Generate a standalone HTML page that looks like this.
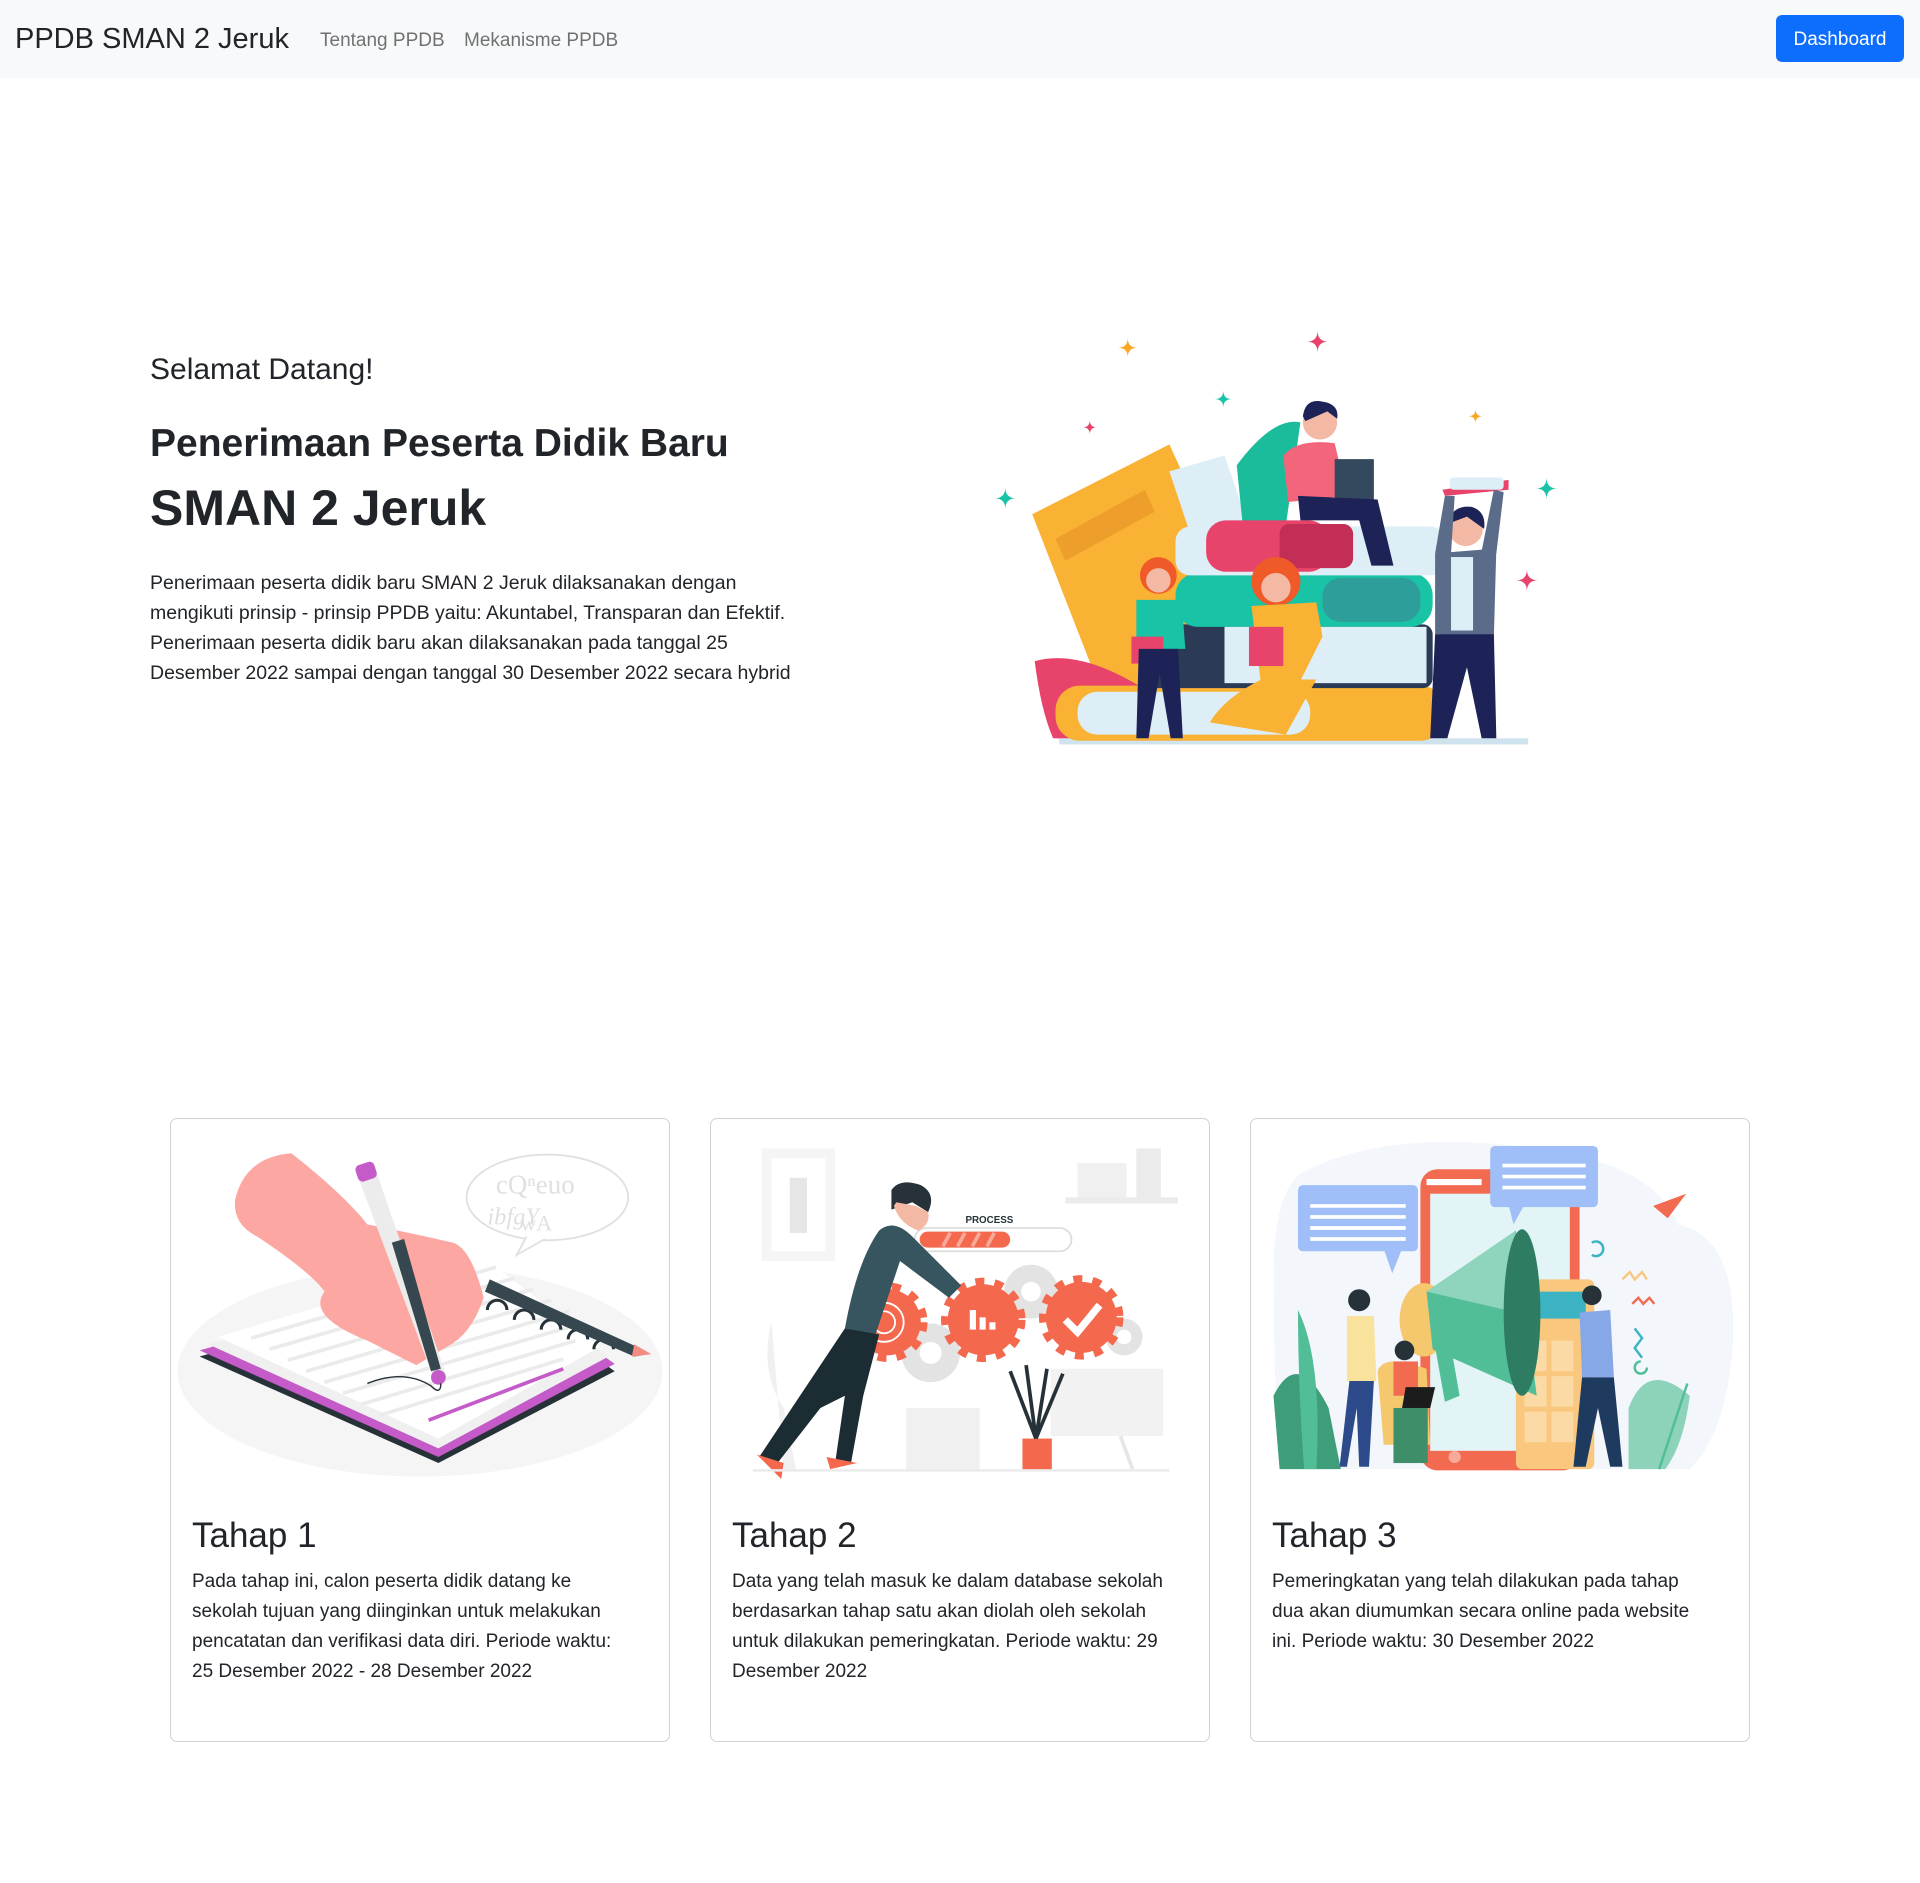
<!DOCTYPE html>
<html><head><meta charset="utf-8"><style>
*{margin:0;padding:0;box-sizing:border-box}
body{width:1920px;height:1883px;position:relative;background:#fff;font-family:"Liberation Sans",sans-serif;color:#212529;overflow:hidden}
.nav{position:absolute;left:0;top:0;width:1920px;height:78px;background:#f8f9fa}
.brand{position:absolute;left:15px;top:22px;font-size:29px;line-height:34px;color:#212529}
.link{position:absolute;top:29px;font-size:19px;line-height:24px;color:rgba(0,0,0,.55)}
.btn{position:absolute;left:1776px;top:15px;width:128px;height:47px;background:#0d6efd;color:#fff;border-radius:6px;font-size:19px;line-height:49px;text-align:center}
.t{position:absolute;white-space:nowrap}
.card{position:absolute;top:1118px;width:500px;height:624px;border:1px solid rgba(0,0,0,.175);border-radius:7px}
.card h2{position:absolute;left:21px;top:396px;font-size:35px;line-height:42px;font-weight:500}
.card p{position:absolute;left:21px;top:448px;font-size:19px;line-height:30px;white-space:nowrap}
svg.ill{position:absolute;left:0;top:0}
</style></head><body>
<div class="nav">
<div class="brand">PPDB SMAN 2 Jeruk</div>
<div class="link" style="left:320px">Tentang PPDB</div>
<div class="link" style="left:464px">Mekanisme PPDB</div>
<div class="btn">Dashboard</div>
</div>

<div class="t" style="left:150px;top:352px;font-size:30px;line-height:36px;font-weight:500">Selamat Datang!</div>
<div class="t" style="left:150px;top:420px;font-size:39px;line-height:48px;font-weight:bold">Penerimaan Peserta Didik Baru</div>
<div class="t" style="left:150px;top:477px;font-size:50px;line-height:62px;font-weight:bold">SMAN 2 Jeruk</div>
<div class="t" style="left:150px;top:568px;font-size:19.5px;line-height:30px">Penerimaan peserta didik baru SMAN 2 Jeruk dilaksanakan dengan<br>mengikuti prinsip - prinsip PPDB yaitu: Akuntabel, Transparan dan Efektif.<br>Penerimaan peserta didik baru akan dilaksanakan pada tanggal 25<br>Desember 2022 sampai dengan tanggal 30 Desember 2022 secara hybrid</div>

<div class="card" style="left:170px"><h2>Tahap 1</h2><p>Pada tahap ini, calon peserta didik datang ke<br>sekolah tujuan yang diinginkan untuk melakukan<br>pencatatan dan verifikasi data diri. Periode waktu:<br>25 Desember 2022 - 28 Desember 2022</p></div>
<div class="card" style="left:710px"><h2>Tahap 2</h2><p>Data yang telah masuk ke dalam database sekolah<br>berdasarkan tahap satu akan diolah oleh sekolah<br>untuk dilakukan pemeringkatan. Periode waktu: 29<br>Desember 2022</p></div>
<div class="card" style="left:1250px"><h2>Tahap 3</h2><p>Pemeringkatan yang telah dilakukan pada tahap<br>dua akan diumumkan secara online pada website<br>ini. Periode waktu: 30 Desember 2022</p></div>

<svg class="ill" width="1920" height="1883" viewBox="0 0 1568 1538" preserveAspectRatio="none">
<g>
<path d="M921,276Q921,284 929,284Q921,284 921,292Q921,284 913,284Q921,284 921,276Z" fill="#F9A826"/>
<path d="M1076,270Q1076,279 1085,279Q1076,279 1076,288Q1076,279 1067,279Q1076,279 1076,270Z" fill="#E8436B"/>
<path d="M999,319Q999,326 1006,326Q999,326 999,333Q999,326 992,326Q999,326 999,319Z" fill="#19C3A6"/>
<path d="M890,343Q890,349 896,349Q890,349 890,355Q890,349 884,349Q890,349 890,343Z" fill="#E8436B"/>
<path d="M1205,334Q1205,340 1211,340Q1205,340 1205,346Q1205,340 1199,340Q1205,340 1205,334Z" fill="#F9A826"/>
<path d="M821,398Q821,407 830,407Q821,407 821,416Q821,407 812,407Q821,407 821,398Z" fill="#19C3A6"/>
<path d="M1263,390Q1263,399 1272,399Q1263,399 1263,408Q1263,399 1254,399Q1263,399 1263,390Z" fill="#19C3A6"/>
<path d="M1247,465Q1247,474 1256,474Q1247,474 1247,483Q1247,474 1238,474Q1247,474 1247,465Z" fill="#E8436B"/>
<path d="M843,420L955,363L1045,560L915,605Z" fill="#F9B233"/>
<path d="M862,440L935,400L943,418L870,458Z" fill="#EE9E2A"/>
<path d="M955,385L1000,372L1020,430L975,445Z" fill="#DDEEF7"/>
<path d="M1010,380Q1040,340 1062,345L1050,430L1015,430Z" fill="#1ABC9C"/>
<path d="M845,540Q880,530 930,560L925,605L860,603Q850,580 845,540Z" fill="#E8436B"/>
<rect x="865" y="603" width="383" height="5" fill="#CFE3EE"/>
<rect x="862" y="560" width="318" height="45" rx="20" fill="#F9B233"/>
<rect x="880" y="565" width="190" height="35" rx="16" fill="#DDEEF7"/>
<rect x="930" y="510" width="240" height="52" rx="8" fill="#2B3A55"/>
<rect x="960" y="468" width="210" height="44" rx="18" fill="#19C3A6"/>
<rect x="1080" y="472" width="80" height="36" rx="15" fill="#2E9E9A"/>
<rect x="1000" y="512" width="165" height="46" fill="#DDEEF7"/>
<rect x="960" y="430" width="220" height="40" rx="12" fill="#DDEEF7"/>
<rect x="985" y="425" width="100" height="42" rx="16" fill="#E8436B"/>
<rect x="1045" y="428" width="60" height="36" rx="8" fill="#C22E55"/>
<circle cx="1078" cy="345" r="14" fill="#F4B9A4"/>
<path d="M1064,340Q1066,325 1080,328Q1094,330 1092,342L1084,336L1066,344Z" fill="#1D2357"/>
<path d="M1048,372Q1060,358 1090,362L1100,405L1052,410Z" fill="#F2657A"/>
<rect x="1090" y="375" width="32" height="36" fill="#34495E"/>
<path d="M1060,405L1125,408L1138,462L1120,462L1110,425L1062,425Z" fill="#1D2357"/>
<circle cx="1197" cy="432" r="14" fill="#F4B9A4"/>
<path d="M1182,428Q1186,412 1202,414Q1214,418 1212,432L1198,422Z" fill="#1D2357"/>
<path d="M1178,400L1232,392L1232,400L1180,405Z" fill="#E8436B"/>
<rect x="1184" y="390" width="44" height="10" rx="3" fill="#DDEEF7"/>
<path d="M1172,452L1222,448L1220,520L1172,518Z" fill="#5A6C8A"/>
<path d="M1172,452L1180,405L1188,405L1185,452Z M1210,450L1220,400L1228,402L1222,452Z" fill="#5A6C8A"/>
<rect x="1185" y="455" width="18" height="60" fill="#DDEEF7"/>
<path d="M1172,518L1220,518L1222,603L1210,603L1198,545L1182,603L1168,603Z" fill="#1D2357"/>
<circle cx="946" cy="470" r="15" fill="#F05A28"/><circle cx="946" cy="474" r="10" fill="#F4B9A4"/>
<path d="M928,490L965,490L968,530L928,530Z" fill="#19C3A6"/>
<rect x="924" y="520" width="26" height="22" fill="#E8436B"/>
<path d="M930,530L962,530L966,603L956,603L947,550L938,603L928,603Z" fill="#1D2357"/>
<circle cx="1042" cy="475" r="20" fill="#F05A28"/><circle cx="1042" cy="480" r="12" fill="#F4B9A4"/>
<path d="M1022,495L1075,492L1080,520L1060,560L1030,560Z" fill="#F9B233"/>
<path d="M1030,555L1075,555L1050,600L988,590Q1000,570 1030,555Z" fill="#F9B233"/>
<rect x="1020" y="512" width="28" height="32" fill="#E8436B"/>
</g>

<g>
<ellipse cx="343" cy="1120" rx="198" ry="86" fill="#F5F5F5"/>
<path d="M163,1108L395,1042L502,1120L358,1195Z" fill="#263238"/>
<path d="M163,1103L395,1037L502,1114L358,1190Z" fill="#C45BC8"/>
<path d="M170,1098L395,1032L497,1108L358,1183Z" fill="#F0F0F0"/>
<path d="M178,1092L395,1027L490,1100L358,1175Z" fill="#fff"/>
<g stroke="#EBEBEB" stroke-width="3">
<line x1="205" y1="1093" x2="405" y2="1035"/><line x1="220" y1="1102" x2="420" y2="1044"/><line x1="235" y1="1111" x2="435" y2="1053"/><line x1="250" y1="1120" x2="450" y2="1062"/><line x1="265" y1="1129" x2="465" y2="1071"/><line x1="280" y1="1138" x2="475" y2="1081"/><line x1="295" y1="1147" x2="470" y2="1095"/><line x1="310" y1="1156" x2="460" y2="1110"/>
</g>
<line x1="350" y1="1160" x2="460" y2="1118" stroke="#C45BC8" stroke-width="3"/>
<g fill="none" stroke="#263238" stroke-width="2.5">
<path d="M398,1070a8,8 0 0 1 16,0"/><path d="M420,1078a8,8 0 0 1 16,0"/><path d="M442,1086a8,8 0 0 1 16,0"/><path d="M464,1094a8,8 0 0 1 16,0"/><path d="M485,1102a8,8 0 0 1 16,0"/>
</g>
<path d="M400,1045L520,1100L530,1106L518,1108L396,1055Z" fill="#37474F"/>
<path d="M518,1098L532,1106L516,1108Z" fill="#F28B82"/>
<path d="M238,942Q200,945 192,980Q190,1000 210,1010Q255,1040 265,1055Q250,1075 300,1095Q330,1110 340,1115L365,1100Q385,1090 395,1060Q385,1020 370,1015Q340,1008 300,1000Q280,975 238,942Z" fill="#FDA7A3"/>
<path d="M290,955L305,950L365,1125L355,1128Z" fill="#ECECEC"/>
<path d="M320,1015L330,1012L360,1118L352,1120Z" fill="#37474F"/>
<rect x="291" y="950" width="16" height="14" rx="4" fill="#C45BC8" transform="rotate(-18 299 957)"/>
<circle cx="358" cy="1125" r="6" fill="#C45BC8"/>
<path d="M300,1130Q330,1118 352,1132Q360,1140 360,1130" fill="none" stroke="#263238" stroke-width="1.2"/>
<ellipse cx="447" cy="978" rx="66" ry="35" fill="#fff" stroke="#E0E0E0" stroke-width="1.5"/>
<path d="M430,1010L422,1025L445,1012" fill="#fff" stroke="#E0E0E0" stroke-width="1.5"/>
<text x="405" y="975" font-family="Liberation Serif" font-size="22" fill="#E0E0E0">cQⁿeuo</text>
<text x="398" y="1000" font-family="Liberation Serif" font-size="20" fill="#E0E0E0" font-style="italic">ibfgY</text>
<text x="425" y="1005" font-family="Liberation Serif" font-size="18" fill="#E0E0E0">wA</text>
</g>

<g>
<rect x="622" y="938" width="60" height="92" fill="#F5F5F5"/><rect x="630" y="946" width="44" height="76" fill="#fff"/><rect x="645" y="962" width="14" height="45" fill="#E6E6E6"/>
<rect x="870" y="978" width="92" height="5" fill="#EBEBEB"/><rect x="880" y="950" width="40" height="28" fill="#F0F0F0"/><rect x="928" y="938" width="20" height="40" fill="#EBEBEB"/>
<rect x="858" y="1118" width="92" height="55" fill="#F2F2F2"/><line x1="915" y1="1173" x2="925" y2="1200" stroke="#E6E6E6" stroke-width="3"/>
<rect x="740" y="1150" width="60" height="50" fill="#F0F0F0"/>
<path d="M630,1080Q620,1120 640,1150L650,1200L640,1200Z" fill="#F0F0F0"/>
<g fill="#E3E3E3"><circle cx="760" cy="1105" r="24"/><circle cx="842" cy="1055" r="22"/><circle cx="918" cy="1092" r="15"/></g>
<g fill="#fff"><circle cx="760" cy="1105" r="9"/><circle cx="842" cy="1055" r="8"/><circle cx="918" cy="1092" r="6"/></g>
<g fill="#F4694E">
<circle cx="725" cy="1080" r="27"/><circle cx="803" cy="1078" r="29"/><circle cx="883" cy="1076" r="29"/>
<g stroke="#F4694E" stroke-width="9" stroke-dasharray="7 8"><circle cx="803" cy="1078" r="30" fill="none"/><circle cx="883" cy="1076" r="30" fill="none"/><circle cx="725" cy="1080" r="28" fill="none"/></g>
</g>
<g fill="none" stroke="#fff" stroke-width="1.5"><circle cx="722" cy="1080" r="16"/><circle cx="722" cy="1080" r="9"/></g>
<g fill="#fff"><rect x="792" y="1070" width="5" height="16"/><rect x="800" y="1076" width="5" height="10"/><rect x="808" y="1080" width="5" height="6"/></g>
<path d="M870,1078L880,1088L898,1066" fill="none" stroke="#fff" stroke-width="6"/>
<rect x="747" y="1003" width="128" height="19" rx="9.5" fill="#fff" stroke="#DDD" stroke-width="1.5"/>
<rect x="751" y="1006" width="74" height="13" rx="6.5" fill="#F4694E"/>
<g stroke="#F8A99A" stroke-width="3"><line x1="770" y1="1018" x2="776" y2="1007"/><line x1="782" y1="1018" x2="788" y2="1007"/><line x1="794" y1="1018" x2="800" y2="1007"/><line x1="806" y1="1018" x2="812" y2="1007"/></g>
<text x="808" y="999" font-family="Liberation Sans" font-size="8" font-weight="bold" fill="#263238" text-anchor="middle">PROCESS</text>
<path d="M728,972Q735,962 752,968Q765,975 758,990L745,982L728,988Z" fill="#263238"/>
<path d="M730,985Q735,1000 750,1005Q760,1000 758,990L748,985L732,982Z" fill="#F4B9A4"/>
<path d="M718,1005Q730,995 745,1010L785,1050L775,1060L735,1030L715,1090L690,1085Q700,1030 718,1005Z" fill="#37555E"/>
<path d="M690,1085L718,1090L705,1140L695,1195L682,1195L690,1140L670,1150L635,1195L620,1190L660,1130Z" fill="#1C2C33"/>
<path d="M618,1188L640,1195L638,1208Z M675,1190L700,1195L678,1200Z" fill="#F4694E"/>
<rect x="835" y="1175" width="24" height="26" fill="#F4694E"/>
<path d="M846,1175L825,1120M846,1175L838,1115M846,1175L855,1118M846,1175L868,1122" stroke="#263238" stroke-width="3"/>
<line x1="615" y1="1201" x2="955" y2="1201" stroke="#EBEBEB" stroke-width="2"/>
</g>

<g>
<path d="M1060,960Q1120,925 1230,935Q1350,945 1370,1000Q1420,1010 1415,1100Q1410,1170 1380,1200L1045,1200Q1040,1120 1040,1040Q1040,980 1060,960Z" fill="#F3F7FC"/>
<rect x="1160" y="955" width="130" height="246" rx="14" fill="#F26B50"/>
<rect x="1168" y="975" width="114" height="210" fill="#E3F4F7"/>
<rect x="1165" y="963" width="45" height="5" fill="#fff"/>
<circle cx="1188" cy="1190" r="5" fill="#F8A99A"/>
<rect x="1238" y="1045" width="64" height="155" rx="5" fill="#F9C77D"/>
<rect x="1245" y="1055" width="50" height="22" fill="#3BB3C3"/>
<g fill="#FBDAA5"><rect x="1245" y="1095" width="18" height="25"/><rect x="1267" y="1095" width="18" height="25"/><rect x="1245" y="1124" width="18" height="25"/><rect x="1267" y="1124" width="18" height="25"/><rect x="1245" y="1153" width="18" height="25"/><rect x="1267" y="1153" width="18" height="25"/></g>
<rect x="1060" y="968" width="98" height="54" rx="4" fill="#A0BFF8"/>
<path d="M1130,1020L1137,1040L1145,1020Z" fill="#A0BFF8"/>
<g stroke="#fff" stroke-width="3"><line x1="1070" y1="985" x2="1148" y2="985"/><line x1="1070" y1="994" x2="1148" y2="994"/><line x1="1070" y1="1003" x2="1148" y2="1003"/><line x1="1070" y1="1012" x2="1148" y2="1012"/></g>
<rect x="1217" y="936" width="88" height="50" rx="4" fill="#A0BFF8"/>
<path d="M1232,984L1236,1000L1245,984Z" fill="#A0BFF8"/>
<g stroke="#fff" stroke-width="3"><line x1="1227" y1="952" x2="1295" y2="952"/><line x1="1227" y1="961" x2="1295" y2="961"/><line x1="1227" y1="970" x2="1295" y2="970"/></g>
<ellipse cx="1163" cy="1078" rx="20" ry="30" fill="#F5C86E"/>
<path d="M1165,1055L1238,1005L1255,1140L1170,1102Z" fill="#52BE98"/>
<path d="M1165,1055L1238,1005L1230,1070Z" fill="#8FD4BD"/>
<ellipse cx="1243" cy="1072" rx="15" ry="68" fill="#2E7D62"/>
<path d="M1172,1100L1185,1100L1192,1140L1180,1145Z" fill="#52BE98"/>
<path d="M1350,985L1377,975L1362,995Z" fill="#F26B50"/>
<g fill="none" stroke-width="2"><path d="M1300,1015a6,6 0 1 1 0,10" stroke="#3BB3C3"/><path d="M1325,1045l6,-6l4,6l6,-6l4,6" stroke="#F9C77D"/><path d="M1333,1065l5,-5l4,5l5,-5l4,5" stroke="#F26B50"/><path d="M1335,1085l6,8l-6,8l6,8" stroke="#3BB3C3"/><path d="M1340,1112a5,5 0 1 0 5,5" stroke="#52BE98"/></g>
<path d="M1040,1140Q1060,1100 1085,1150L1095,1200L1045,1200Z" fill="#3E9E7A"/>
<path d="M1060,1070Q1080,1110 1075,1200L1065,1200Q1060,1130 1060,1070Z" fill="#52BE98"/>
<circle cx="1110" cy="1062" r="9" fill="#263238"/>
<path d="M1100,1075L1122,1075L1124,1128L1100,1128Z" fill="#F9E29C"/>
<path d="M1102,1128L1122,1128L1118,1198L1110,1198L1108,1150L1100,1198L1094,1198Z" fill="#2D4A8A"/>
<path d="M1125,1120Q1130,1105 1165,1118L1168,1180L1130,1180Z" fill="#F5C86E"/>
<circle cx="1147" cy="1103" r="8" fill="#263238"/>
<rect x="1138" y="1112" width="20" height="28" fill="#F26B50"/>
<path d="M1148,1133L1172,1133L1168,1150L1145,1150Z" fill="#1C1C1C"/>
<rect x="1138" y="1150" width="28" height="45" fill="#3E8E6A"/>
<circle cx="1300" cy="1058" r="8" fill="#263238"/>
<path d="M1290,1072L1315,1070L1318,1125L1292,1125Z" fill="#86A8E7"/>
<path d="M1292,1125L1318,1125L1325,1198L1315,1198L1305,1150L1295,1198L1285,1198Z" fill="#1E3A5F"/>
<path d="M1330,1150Q1345,1110 1380,1140Q1375,1180 1360,1200L1330,1200Z" fill="#8CD3BA"/>
<path d="M1355,1200L1378,1130" stroke="#52BE98" stroke-width="2"/>
</g>
</svg>
</body></html>
